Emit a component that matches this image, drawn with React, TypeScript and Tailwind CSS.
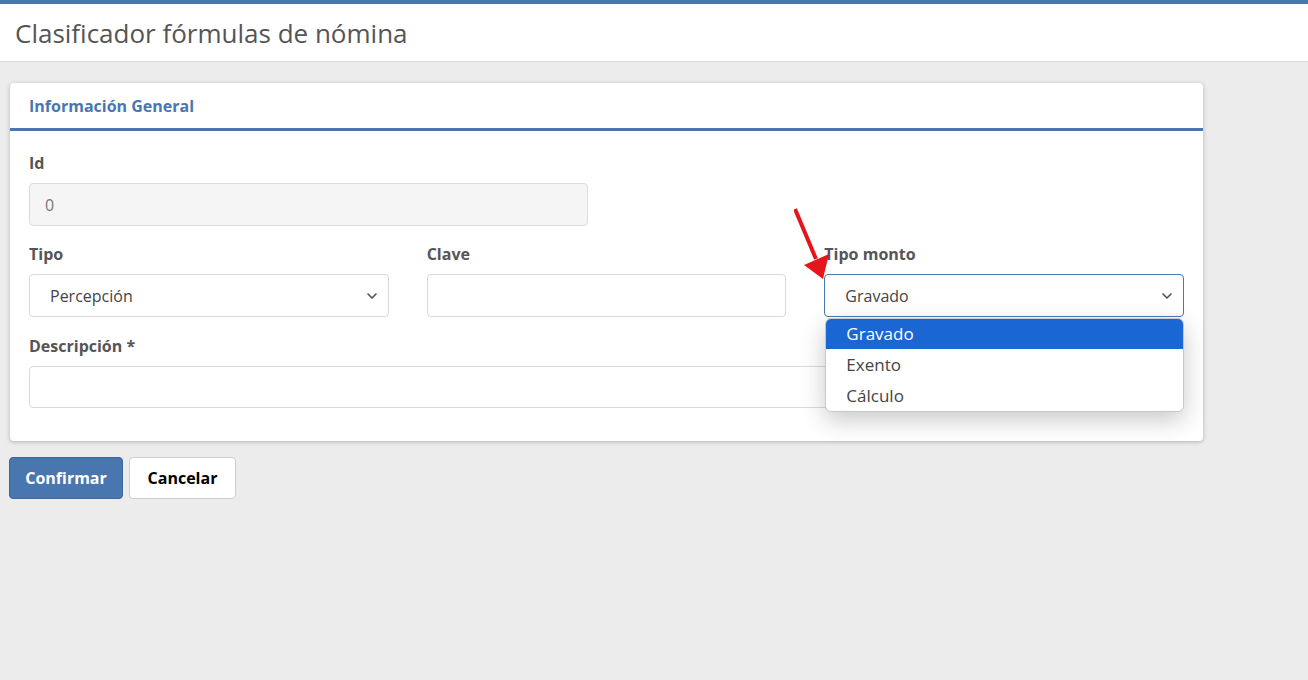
import { ChevronDown } from "lucide-react";

const font = { fontFamily: '"Open Sans", "Noto Sans", sans-serif' };

const Field = ({ label, children }: { label: string; children: React.ReactNode }) => (
  <div className="flex flex-col">
    <label className="mb-[9px] text-[16px] font-bold leading-[22px] text-[#555]">{label}</label>
    {children}
  </div>
);

const SelectBox = ({ value, active }: { value: string; active?: boolean }) => (
  <div
    className={`flex h-[43px] items-center justify-between rounded-[4px] border bg-white pl-[20px] pr-[8px] text-[16px] text-[#444] ${
      active ? "border-[#4a76b3]" : "border-[#d9d9d9]"
    }`}
  >
    <span>{value}</span>
    <ChevronDown size={16} strokeWidth={2.5} className="text-[#555]" />
  </div>
);

const App = () => {
  return (
    <div className="min-h-[680px] bg-[#ececec]" style={font}>
      <div className="border-t-4 border-[#4a76b0] bg-white">
        <div className="flex h-[58px] items-center border-b border-[#dadada] px-[15px]">
          <h1 className="text-[26px] leading-none text-[#555]">Clasificador fórmulas de nómina</h1>
        </div>
      </div>

      <div className="px-[10px] pt-[21px]">
        <div className="w-[1193px] rounded-[4px] bg-white shadow-[0_1px_4px_rgba(0,0,0,0.25)]">
          <div className="flex h-[48px] items-center border-b-[3px] border-[#4a76b0] px-[19px]">
            <span className="text-[16px] font-bold text-[#4a76b0]">Información General</span>
          </div>

          <div className="px-[19px] pb-[33px] pt-[21px]">
            <Field label="Id">
              <div className="flex h-[43px] w-[559px] items-center rounded-[4px] border border-[#dcdcdc] bg-[#f5f5f5] px-[15px] text-[16px] text-[#777]">
                0
              </div>
            </Field>

            <div className="mt-[17px] grid grid-cols-3 gap-x-[38px]">
              <Field label="Tipo">
                <SelectBox value="Percepción" />
              </Field>
              <Field label="Clave">
                <div className="h-[43px] rounded-[4px] border border-[#d9d9d9] bg-white" />
              </Field>
              <div className="relative">
                <Field label="Tipo monto">
                  <SelectBox value="Gravado" active />
                </Field>
                <div className="absolute left-[1px] right-0 top-[75px] z-10 overflow-hidden rounded-[6px] border border-[#c8c8c8] bg-white text-[17px] leading-[31px] text-[#444] shadow-[0_8px_24px_rgba(0,0,0,0.22)]">
                  <div className="bg-[#1a66d2] px-[20px] leading-[30px] text-white">Gravado</div>
                  <div className="px-[20px]">Exento</div>
                  <div className="px-[20px]">Cálculo</div>
                </div>
                <svg
                  className="pointer-events-none absolute left-[-30px] top-[-36px] z-20"
                  width="40"
                  height="80"
                  viewBox="0 0 40 80"
                >
                  <line x1="1" y1="2" x2="22" y2="52" stroke="#e3161b" strokeWidth="4" />
                  <polygon points="10,58 35,47 29,72" fill="#e3161b" />
                </svg>
              </div>
            </div>

            <div className="mt-[18px]">
              <Field label="Descripción *">
                <div className="h-[42px] rounded-[4px] border border-[#d9d9d9] bg-white" />
              </Field>
            </div>
          </div>
        </div>

        <div className="mt-[16px] flex gap-[6px]">
          <button className="ml-[-1px] h-[42px] w-[114px] rounded-[4px] border border-[#3d6699] bg-[#4a76b0] text-[16px] font-bold text-white">
            Confirmar
          </button>
          <button className="h-[42px] w-[107px] rounded-[4px] border border-[#cfcfcf] bg-white text-[16px] font-bold text-black">
            Cancelar
          </button>
        </div>
      </div>
    </div>
  );
};

export default App;
